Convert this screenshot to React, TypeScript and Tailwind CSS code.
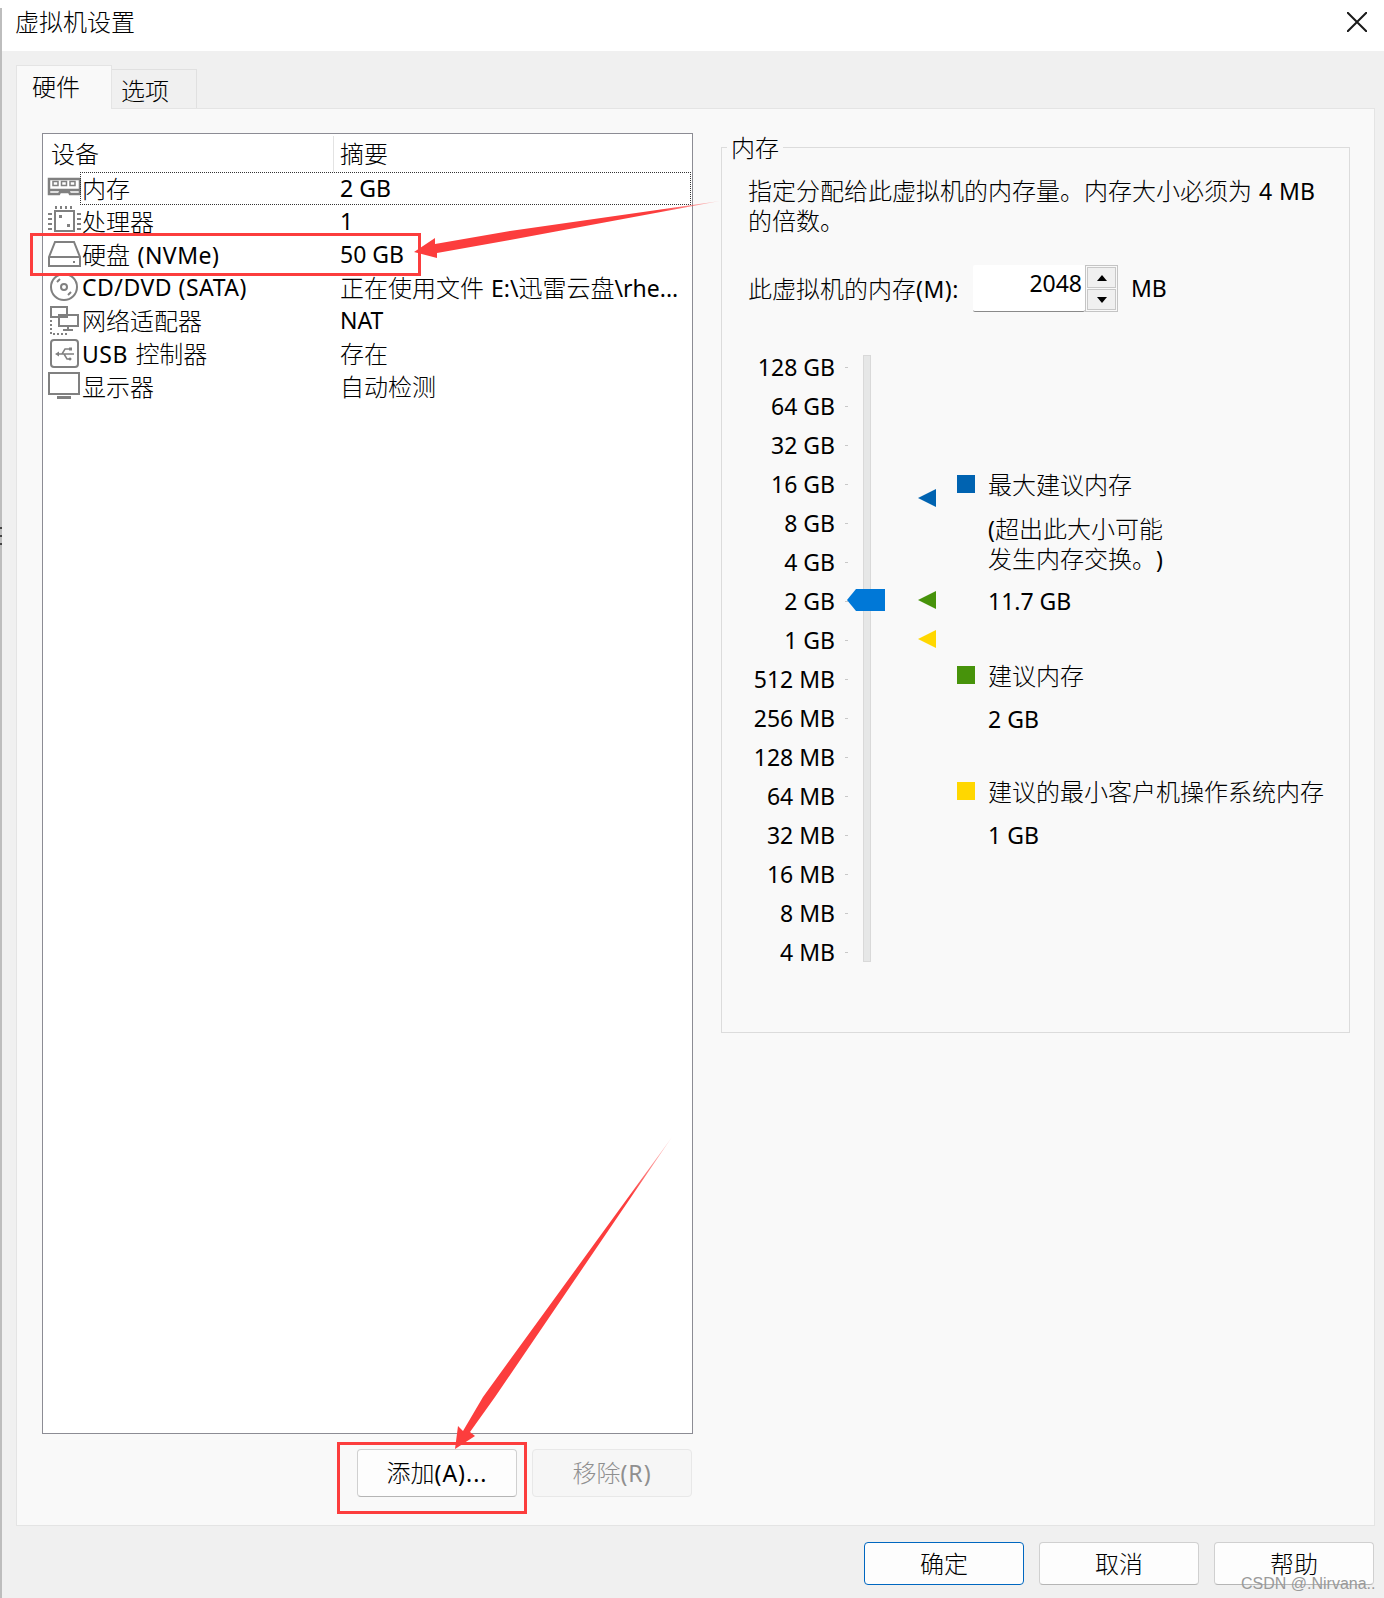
const font = "font-['Noto_Sans','Noto_Sans_CJK_SC',sans-serif]"

const iconClass = 'w-[34px] h-[33px] shrink-0 text-[#808080]'

// CJK runs sit on a 24px cell in the dialog, latin runs stay at 23px
function Mixed({ text, latin }: { text: string; latin?: string }) {
  const runs = text.match(/[\u3000-\u9fff]+|[^\u3000-\u9fff]+/g) ?? []
  return (
    <>
      {runs.map((r, i) =>
        /[\u3000-\u9fff]/.test(r) ? (
          <span key={i} className="text-[24px] font-light">{r}</span>
        ) : (
          <span key={i} className={`${runs.length > 1 ? '[word-spacing:1px]' : ''} ${latin ?? ''}`}>{r}</span>
        ),
      )}
    </>
  )
}

function MemoryIcon() {
  return (
    <svg className={iconClass} viewBox="0 0 34 33" fill="none" stroke="currentColor" strokeWidth="2.500">
      <path d="M2 7h31v15h-10l-1-2h-9l-1 2H2z" />
      <path d="M2 18h31" />
      <path d="M6 9.500h5v4H6zM14.500 9.500h5v4h-5zM23 9.500h5v4h-5z" strokeWidth="1.500" />
    </svg>
  )
}

function CpuIcon() {
  return (
    <svg className={iconClass} viewBox="0 0 34 33" fill="none" stroke="currentColor" strokeWidth="2">
      <rect x="8" y="6" width="19" height="20" />
      <path d="M9 1v3M14 1v3M19 1v3M24 1v3M1 9h4M1 14h4M1 19h4M1 24h4M30 9h4M30 14h4M30 19h4M30 24h4" strokeWidth="2" />
      <rect x="12" y="10" width="3" height="3" fill="currentColor" stroke="none" />
      <rect x="20" y="19" width="3" height="3" fill="currentColor" stroke="none" />
    </svg>
  )
}

function DiskIcon() {
  return (
    <svg className={iconClass} viewBox="0 0 34 33" fill="none" stroke="currentColor" strokeWidth="2">
      <path d="M2 19L8 4h19l6 15v9H2z" />
      <path d="M2 19h31" />
      <rect x="26" y="23" width="2" height="2" fill="currentColor" stroke="none" />
    </svg>
  )
}

function CdIcon() {
  return (
    <svg className={iconClass} viewBox="0 0 34 33" fill="none" stroke="currentColor" strokeWidth="2">
      <circle cx="17" cy="16" r="13" />
      <circle cx="17" cy="16" r="3" />
      <path d="M10 11l3-3M21 24l3-3" />
    </svg>
  )
}

function NetworkIcon() {
  return (
    <svg className={iconClass} viewBox="0 0 34 33" fill="none" stroke="currentColor" strokeWidth="2">
      <path d="M4 3h16v10H4z" />
      <path d="M12 11h19v11H12zM21 22v4M16 26h10" />
      <path d="M4 16v14h16" strokeDasharray="2 2" />
    </svg>
  )
}

function UsbIcon() {
  return (
    <svg className={iconClass} viewBox="0 0 34 33" fill="none" stroke="currentColor" strokeWidth="2">
      <rect x="4" y="3" width="27" height="27" rx="3" />
      <path d="M12 17h15M15 17l3-5h4M17 17l3 5h3" strokeWidth="1.500" />
      <path d="M8 17l4-2.500v5zM22 10.500h3v3h-3zM23 20.500a1.500 1.500 0 1 0 .01 0z" fill="currentColor" stroke="none" />
    </svg>
  )
}

function MonitorIcon() {
  return (
    <svg className={iconClass} viewBox="0 0 34 33" fill="none" stroke="currentColor" strokeWidth="2">
      <rect x="2" y="3" width="30" height="21" />
      <path d="M10 27.500h14" strokeWidth="3" />
    </svg>
  )
}

const devices = [
  { icon: <MemoryIcon />, name: '内存', summary: '2 GB', focus: true },
  { icon: <CpuIcon />, name: '处理器', summary: '1' },
  { icon: <DiskIcon />, name: '硬盘 (NVMe)', summary: '50 GB' },
  { icon: <CdIcon />, name: 'CD/DVD (SATA)', summary: '正在使用文件 E:\\迅雷云盘\\rhe...' },
  { icon: <NetworkIcon />, name: '网络适配器', summary: 'NAT' },
  { icon: <UsbIcon />, name: 'USB 控制器', summary: '存在' },
  { icon: <MonitorIcon />, name: '显示器', summary: '自动检测' },
]

const sizes = [
  '128 GB', '64 GB', '32 GB', '16 GB', '8 GB', '4 GB', '2 GB', '1 GB',
  '512 MB', '256 MB', '128 MB', '64 MB', '32 MB', '16 MB', '8 MB', '4 MB',
]

function DeviceList() {
  return (
    <div className="w-[651px] h-[1301px] bg-white border border-[#8c8c94]">
      <div className="flex h-[38px] items-center pt-[2px]">
        <div className="w-[291px] h-full pl-[8px] flex items-center border-r border-[#e3e3e3]"><Mixed text="设备" /></div>
        <div className="pl-[6px]"><Mixed text="摘要" /></div>
      </div>
      {devices.map((d) => (
        <div key={d.name} className="relative flex h-[33px] items-center pl-[4px]">
          {d.icon}
          <div className="w-[257px] whitespace-nowrap pl-[1px]"><Mixed text={d.name} latin="tracking-[0.5px]" /></div>
          <div className="pl-[2px] whitespace-nowrap"><Mixed text={d.summary} /></div>
          {d.focus && (
            <div className="absolute left-[37px] right-[1px] top-0 bottom-0 border border-dotted border-[#333333]" />
          )}
        </div>
      ))}
    </div>
  )
}

function Spinner() {
  return (
    <div className="w-[145px] h-[47px] flex">
      <div className="w-[112px] h-full bg-white border-b border-[#8a8a8a] text-right pr-[3px] rounded-[2px] flex items-start justify-end">
        <span className="leading-[36px]">2048</span>
      </div>
      <div className="w-[33px] h-full border border-[#c4c4c4] flex flex-col justify-between p-[1px]">
        <div className="h-[21px] bg-[#f0f0f0] border border-[#c8c8c8] flex items-center justify-center">
          <div className="w-0 h-0 border-x-[5px] border-x-transparent border-b-[6px] border-b-black" />
        </div>
        <div className="h-[21px] bg-[#f0f0f0] border border-[#c8c8c8] flex items-center justify-center">
          <div className="w-0 h-0 border-x-[5px] border-x-transparent border-t-[6px] border-t-black" />
        </div>
      </div>
    </div>
  )
}

function Slider() {
  return (
    <div className="flex ml-[1px] mt-[36px]">
      <div className="w-[97px] shrink-0">
        {sizes.map((s) => (
          <div key={s} className="h-[39px] flex items-center justify-end">
            <span className="mr-[10px]">{s}</span>
            <span className="w-[3px] h-px bg-[#c8c8c8] shrink-0 mr-[-2px]" />
          </div>
        ))}
      </div>
      <div className="relative w-[8px] shrink-0 ml-[17px] h-[607px] bg-[#e6e7e7] border border-[#d9d9d9] mt-[7px]">
        <svg className="absolute left-[-17px] top-[233px] w-[38px] h-[22px]" viewBox="0 0 38 22">
          <path d="M0 11L9 0h29v22H9z" fill="#0078d7" />
        </svg>
      </div>
      <div className="w-[18px] ml-[47px] relative shrink-0">
        <div className="w-0 h-0 mt-[141px] border-y-[9px] border-y-transparent border-r-[18px] border-r-[#0063b1]" />
        <div className="w-0 h-0 mt-[84px] border-y-[9px] border-y-transparent border-r-[18px] border-r-[#47930b]" />
        <div className="w-0 h-0 mt-[21px] border-y-[9px] border-y-transparent border-r-[18px] border-r-[#ffd700]" />
      </div>
      <div className="ml-[21px] mt-[119px]">
        <div className="flex items-center h-[36px]">
          <div className="w-[18px] h-[18px] bg-[#0063b1] mr-[13px] mt-[-2px]" />
          <div><Mixed text="最大建议内存" /></div>
        </div>
        <div className="ml-[31px] mt-[11px] leading-[29px]">
          <div><Mixed text="(超出此大小可能" /></div>
          <div><Mixed text="发生内存交换。)" /></div>
        </div>
        <div className="ml-[31px] mt-[13px] leading-[29px]">11.7 GB</div>
        <div className="flex items-center h-[36px] mt-[42px]">
          <div className="w-[18px] h-[18px] bg-[#47930b] mr-[13px] mt-[-2px]" />
          <div><Mixed text="建议内存" /></div>
        </div>
        <div className="ml-[31px] mt-[11px] leading-[29px]">2 GB</div>
        <div className="flex items-center h-[36px] mt-[40px]">
          <div className="w-[18px] h-[18px] bg-[#ffd700] mr-[13px] mt-[-2px]" />
          <div className="whitespace-nowrap"><Mixed text="建议的最小客户机操作系统内存" /></div>
        </div>
        <div className="ml-[31px] mt-[11px] leading-[29px]">1 GB</div>
      </div>
    </div>
  )
}

function MemoryGroup() {
  return (
    <div className="relative w-[629px] h-[886px] mt-[14px] border border-[#dcdcdc] px-[26px] pt-[28px]">
      <div className="absolute left-[5px] top-[-15px] px-[4px] bg-[#f9f9f9] leading-[29px]"><Mixed text="内存" /></div>
      <div className="leading-[29px] whitespace-nowrap">
        <div><Mixed text="指定分配给此虚拟机的内存量。内存大小必须为 4 MB" /></div>
        <div><Mixed text="的倍数。" /></div>
      </div>
      <div className="flex items-center mt-[29px]">
        <div className="w-[225px] whitespace-nowrap"><Mixed text="此虚拟机的内存(M):" latin="tracking-[0.5px]" /></div>
        <Spinner />
        <div className="ml-[13px]">MB</div>
      </div>
      <Slider />
    </div>
  )
}

function DialogButton({ label, primary, disabled }: { label: string; primary?: boolean; disabled?: boolean }) {
  const look = primary
    ? 'border-[#0067c0] bg-[#fdfdfd]'
    : disabled
      ? 'border-[#e8e8e8] bg-[#f6f6f6] text-[#8f8f8f]'
      : 'border-[#d0d0d0] border-b-[#b5b5b5] bg-[#fdfdfd]'
  return (
    <button className={`w-[160px] rounded-[4px] border flex items-center justify-center ${look}`}>
      <span><Mixed text={label} latin="tracking-[1px]" /></span>
    </button>
  )
}

export default function App() {
  return (
    <div className={`relative w-[1384px] h-[1598px] overflow-hidden flex flex-col bg-[#f0f0f0] text-[23px] leading-none text-black [text-spacing-trim:space-all] ${font}`}>
      <div className="h-[51px] shrink-0 bg-white flex items-center justify-between pl-[15px] pr-[17px] pb-[7px]">
        <span><Mixed text="虚拟机设置" /></span>
        <svg className="w-[20px] h-[20px]" viewBox="0 0 20 20" fill="none" stroke="#1a1a1a" strokeWidth="2">
          <path d="M0 0l20 20M20 0L0 20" />
        </svg>
      </div>

      <div className="flex-1 flex flex-col pl-[16px] pr-[9px]">
        <div className="flex items-end h-[57px] shrink-0">
          <div className="relative z-10 w-[96px] h-[44px] mb-[-1px] bg-[#f9f9f9] border border-b-0 border-[#e4e4e4] pl-[15px] pt-[9px]"><Mixed text="硬件" /></div>
          <div className="w-[85px] h-[39px] bg-[#f0f0f0] border border-l-0 border-b-0 border-[#e0e0e0] pl-[9px] pt-[9px]"><Mixed text="选项" /></div>
        </div>

        <div className="w-[1359px] h-[1418px] bg-[#f9f9f9] border border-[#e4e4e4] pl-[25px] pt-[24px]">
          <div className="flex gap-[28px]">
            <div className="flex flex-col">
              <DeviceList />
              <div className="flex justify-end gap-[15px] mt-[15px] h-[48px] pr-[1px]">
                <DialogButton label="添加(A)..." />
                <DialogButton label="移除(R)" disabled />
              </div>
            </div>
            <MemoryGroup />
          </div>
        </div>

        <div className="flex justify-end gap-[15px] h-[43px] mt-[16px] pr-[1px]">
          <DialogButton label="确定" primary />
          <DialogButton label="取消" />
          <DialogButton label="帮助" />
        </div>
      </div>

      {/* edge of the window behind the dialog */}
      <div className="absolute left-0 top-0 h-full w-[2px] bg-[#bdbdbd] flex flex-col">
        <div className="h-[8px] bg-white" />
        <div className="h-[519px]" />
        <div className="h-[2px] bg-[#444444]" />
        <div className="h-[6px]" />
        <div className="h-[2px] bg-[#444444]" />
        <div className="h-[6px]" />
        <div className="h-[2px] bg-[#444444]" />
      </div>

      {/* annotations on top of the screenshot */}
      <div className="absolute left-[30px] top-[233px] w-[391px] h-[43px] border-[3px] border-[#fc3d3d]" />
      <div className="absolute left-[337px] top-[1442px] w-[190px] h-[72px] border-[3px] border-[#fc3d3d]" />
      <svg className="absolute inset-0 w-full h-full pointer-events-none" viewBox="0 0 1384 1598">
        <defs>
          <linearGradient id="tailA" gradientUnits="userSpaceOnUse" x1="720" y1="201" x2="660" y2="211">
            <stop offset="0" stopColor="#fc3d3d" stopOpacity="0.2" />
            <stop offset="1" stopColor="#fc3d3d" />
          </linearGradient>
          <linearGradient id="tailB" gradientUnits="userSpaceOnUse" x1="672" y1="1137" x2="632" y2="1197">
            <stop offset="0" stopColor="#fc3d3d" stopOpacity="0.2" />
            <stop offset="1" stopColor="#fc3d3d" />
          </linearGradient>
        </defs>
        <path d="M414 252L435 238L435 244L510 231L720 201L510 240L437 253L437 258Z" fill="url(#tailA)" />
        <path d="M455 1449L458 1426L463 1431L483 1397L672 1137L495 1397L470 1432L475 1436Z" fill="url(#tailB)" />
      </svg>
      <div className="absolute left-[1241px] top-[1575px] text-[16px] leading-[18px] text-[#9a9a9a] font-['Liberation_Sans',sans-serif] whitespace-nowrap">
        CSDN @.Nirvana..
      </div>
    </div>
  )
}
